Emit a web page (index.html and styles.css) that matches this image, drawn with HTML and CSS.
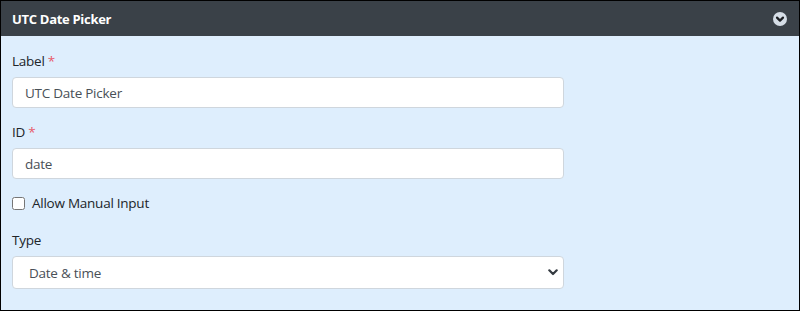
FILE: index.html
```html
<!DOCTYPE html>
<html>
<head>
<meta charset="utf-8">
<link rel="stylesheet" href="styles.css">
</head>
<body>
<div class="panel">
  <div class="panel-header">
    <span class="panel-title">UTC Date Picker</span>
    <svg class="toggle" width="14" height="14" viewBox="0 0 14 14">
      <circle cx="7" cy="7" r="7" fill="#d5dde6"/>
      <path d="M4 5.6 L7 8.6 L10 5.6" fill="none" stroke="#1c1f23" stroke-width="2.2" stroke-linecap="round" stroke-linejoin="round"/>
    </svg>
  </div>
  <div class="panel-body">
    <div class="field">
      <label class="label">Label <span class="req">*</span></label>
      <input class="control" type="text" value="UTC Date Picker">
    </div>
    <div class="field">
      <label class="label">ID <span class="req">*</span></label>
      <input class="control" type="text" value="date">
    </div>
    <div class="check">
      <input type="checkbox" class="checkbox">
      <span>Allow Manual Input</span>
    </div>
    <div class="field">
      <label class="label">Type</label>
      <div class="select-wrap">
        <select class="control select">
          <option>Date &amp; time</option>
        </select>
        <svg class="caret" width="10" height="7" viewBox="0 0 10 7">
          <path d="M1.3 1.3 L5 5 L8.7 1.3" fill="none" stroke="#343a40" stroke-width="2.2" stroke-linecap="round" stroke-linejoin="round"/>
        </svg>
      </div>
    </div>
  </div>
</div>
</body>
</html>
```

FILE: styles.css
```css
* { box-sizing: border-box; }
html, body {
  margin: 0;
  padding: 0;
  background: #ffffff;
}
body {
  font-family: "Open Sans", "Noto Sans", sans-serif;
  color: #212529;
}
.panel {
  width: 800px;
  height: 311px;
  border: 1px solid #000;
  display: flex;
  flex-direction: column;
  background: #deeefd;
}
.panel-header {
  height: 35px;
  background: #3a4148;
  display: flex;
  align-items: center;
  justify-content: space-between;
  padding: 0 12px 0 11px;
  flex-shrink: 0;
}
.panel-title {
  color: #fff;
  font-weight: 700;
  font-size: 13px;
  letter-spacing: -0.3px;
}
.toggle {
  display: block;
}
.panel-body {
  padding: 16px 235px 0 11px;
  display: flex;
  flex-direction: column;
}
.field {
  display: flex;
  flex-direction: column;
  margin-bottom: 15px;
}
.label {
  font-size: 13.5px;
  line-height: 19px;
  margin-bottom: 6px;
  letter-spacing: -0.25px;
}
.req { color: #e85a6a; }
.control {
  height: 31px;
  width: 100%;
  border: 1px solid #cfd6dd;
  border-radius: 4px;
  background: #fff;
  padding: 0 12px;
  font-family: inherit;
  font-size: 13.5px;
  color: #495057;
  letter-spacing: -0.25px;
  outline: none;
}
.check {
  display: flex;
  align-items: center;
  gap: 7px;
  font-size: 13.5px;
  letter-spacing: -0.25px;
  margin: 0 0 19px;
  height: 18px;
}
.checkbox {
  margin: 0;
  width: 13px;
  height: 13px;
}
.select-wrap {
  position: relative;
}
.select {
  height: 33px;
  appearance: none;
  -webkit-appearance: none;
  padding: 0 16px;
}
.caret {
  position: absolute;
  right: 6px;
  top: 13px;
}
```
